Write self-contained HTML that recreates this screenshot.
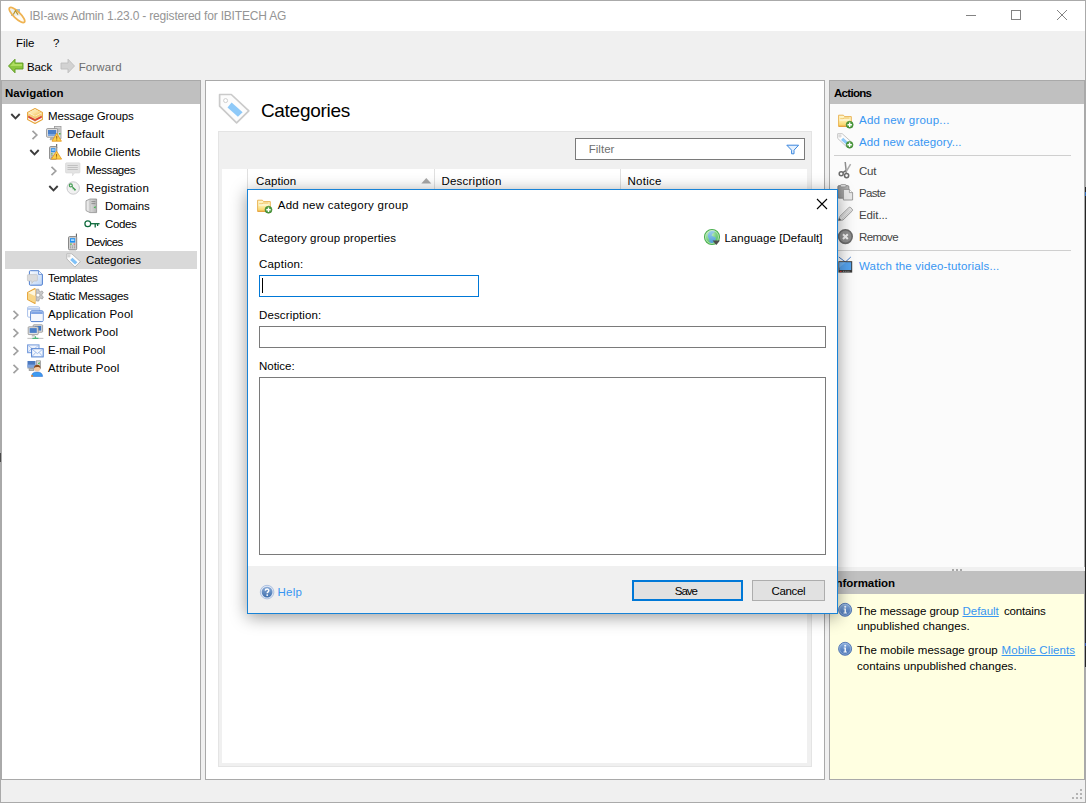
<!DOCTYPE html>
<html><head><meta charset="utf-8"><title>IBI-aws Admin</title>
<style>
*{box-sizing:border-box;margin:0;padding:0}
html,body{width:1086px;height:803px;overflow:hidden;background:#f0f0f0;font-family:"Liberation Sans",sans-serif;font-size:12px;color:#000}
.abs{position:absolute}
.tx{position:absolute;white-space:pre;line-height:1.2}
svg{position:absolute;overflow:visible}

</style></head><body>
<div class="abs" style="left:0;top:0;width:1086px;height:803px;border:1px solid #aaa;background:#f0f0f0"></div>
<div class="abs" style="left:1px;top:1px;width:1084px;height:30px;background:#fff"></div>

<div class="abs" style="left:1085px;top:187px;width:1px;height:480px;background:#252525"></div>
<div class="abs" style="left:1085px;top:192px;width:1px;height:4px;background:#2f6fc0"></div>
<div class="abs" style="left:1085px;top:643px;width:1px;height:3px;background:#2f55b0"></div>
<div class="abs" style="left:0;top:453px;width:1px;height:9px;background:#4a4a4a"></div>

<!-- nav panel -->
<div class="abs" style="left:1px;top:80px;width:200px;height:700px;background:#fff;border:1px solid #a9a9a9"></div>
<div class="abs" style="left:2px;top:81px;width:198px;height:23px;background:#c0c0c0"></div>
<div class="abs" style="left:5px;top:251px;width:192px;height:18px;background:#d9d9d9"></div>

<!-- main panel -->
<div class="abs" style="left:205px;top:80px;width:620px;height:700px;background:#fff;border:1px solid #a9a9a9"></div>
<div class="abs" style="left:218px;top:131px;width:594px;height:636px;background:#f0f0f0;border:1px solid #e4e4e4"></div>
<div class="abs" style="left:222px;top:169px;width:585px;height:594px;background:#fff"></div>
<div class="abs" style="left:247px;top:169px;width:1px;height:22px;background:#e0e0e0"></div>
<div class="abs" style="left:434px;top:169px;width:1px;height:22px;background:#e0e0e0"></div>
<div class="abs" style="left:620px;top:169px;width:1px;height:22px;background:#e0e0e0"></div>
<div class="abs" style="left:575px;top:138px;width:230px;height:22px;background:#fff;border:1px solid #7a7a7a"></div>

<!-- actions panel -->
<div class="abs" style="left:829px;top:80px;width:256px;height:487px;background:#fbfbfb;border:1px solid #a9a9a9;border-bottom:none"></div>
<div class="abs" style="left:830px;top:81px;width:254px;height:23px;background:#c0c0c0"></div>
<div class="abs" style="left:834px;top:155px;width:237px;height:1px;background:#cfcfcf"></div>
<div class="abs" style="left:834px;top:250px;width:237px;height:1px;background:#cfcfcf"></div>

<!-- info panel -->
<div class="abs" style="left:829px;top:571px;width:256px;height:209px;background:#ffffe1;border:1px solid #a9a9a9;border-top:none"></div>
<div class="abs" style="left:830px;top:571px;width:254px;height:23px;background:#c0c0c0"></div>

<span class="tx" style="left:29.4px;top:9px;font-size:12px;letter-spacing:-0.18px;color:#959595;">IBI-aws Admin 1.23.0 - registered for IBITECH AG</span>
<span class="tx" style="left:15.9px;top:37px;font-size:11.5px;letter-spacing:-0.03px;color:#000;">File</span>
<span class="tx" style="left:52.9px;top:37px;font-size:11.5px;letter-spacing:-1.00px;color:#000;">?</span>
<span class="tx" style="left:26.9px;top:61px;font-size:11.5px;letter-spacing:-0.10px;color:#000;">Back</span>
<span class="tx" style="left:78.7px;top:61px;font-size:11.5px;letter-spacing:0.13px;color:#6d6d6d;">Forward</span>
<span class="tx" style="left:4.9px;top:87px;font-size:11.5px;letter-spacing:-0.01px;color:#000;font-weight:bold;">Navigation</span>
<span class="tx" style="left:833.9px;top:87px;font-size:11.5px;letter-spacing:-0.68px;color:#000;font-weight:bold;">Actions</span>
<span class="tx" style="left:832.4px;top:577px;font-size:11.5px;letter-spacing:-0.06px;color:#000;font-weight:bold;">Information</span>
<span class="tx" style="left:48.0px;top:110px;font-size:11.5px;letter-spacing:-0.14px;color:#000;">Message Groups</span>
<span class="tx" style="left:67.0px;top:128px;font-size:11.5px;letter-spacing:0.12px;color:#000;">Default</span>
<span class="tx" style="left:67.0px;top:146px;font-size:11.5px;letter-spacing:0.08px;color:#000;">Mobile Clients</span>
<span class="tx" style="left:86.0px;top:164px;font-size:11.5px;letter-spacing:-0.40px;color:#000;">Messages</span>
<span class="tx" style="left:86.0px;top:182px;font-size:11.5px;letter-spacing:0.13px;color:#000;">Registration</span>
<span class="tx" style="left:105.0px;top:200px;font-size:11.5px;letter-spacing:-0.10px;color:#000;">Domains</span>
<span class="tx" style="left:105.0px;top:218px;font-size:11.5px;letter-spacing:-0.40px;color:#000;">Codes</span>
<span class="tx" style="left:86.0px;top:236px;font-size:11.5px;letter-spacing:-0.60px;color:#000;">Devices</span>
<span class="tx" style="left:86.0px;top:254px;font-size:11.5px;letter-spacing:-0.06px;color:#000;">Categories</span>
<span class="tx" style="left:48.0px;top:272px;font-size:11.5px;letter-spacing:-0.33px;color:#000;">Templates</span>
<span class="tx" style="left:48.0px;top:290px;font-size:11.5px;letter-spacing:-0.25px;color:#000;">Static Messages</span>
<span class="tx" style="left:48.0px;top:308px;font-size:11.5px;letter-spacing:0.17px;color:#000;">Application Pool</span>
<span class="tx" style="left:48.0px;top:326px;font-size:11.5px;letter-spacing:0.16px;color:#000;">Network Pool</span>
<span class="tx" style="left:48.0px;top:344px;font-size:11.5px;letter-spacing:-0.14px;color:#000;">E-mail Pool</span>
<span class="tx" style="left:48.0px;top:362px;font-size:11.5px;letter-spacing:0.18px;color:#000;">Attribute Pool</span>
<span class="tx" style="left:260.9px;top:100px;font-size:19px;letter-spacing:-0.28px;color:#000;">Categories</span>
<span class="tx" style="left:588.7px;top:143px;font-size:11.5px;letter-spacing:0.04px;color:#707070;">Filter</span>
<span class="tx" style="left:256.1px;top:175px;font-size:11.5px;letter-spacing:0.07px;color:#000;">Caption</span>
<span class="tx" style="left:441.4px;top:175px;font-size:11.5px;letter-spacing:0.24px;color:#000;">Description</span>
<span class="tx" style="left:627.4px;top:175px;font-size:11.5px;letter-spacing:0.28px;color:#000;">Notice</span>
<span class="tx" style="left:859.0px;top:114px;font-size:11.5px;letter-spacing:0.23px;color:#3896f2;">Add new group...</span>
<span class="tx" style="left:859.0px;top:136px;font-size:11.5px;letter-spacing:0.09px;color:#3896f2;">Add new category...</span>
<span class="tx" style="left:859.0px;top:165px;font-size:11.5px;letter-spacing:-0.20px;color:#444;">Cut</span>
<span class="tx" style="left:859.0px;top:187px;font-size:11.5px;letter-spacing:-0.65px;color:#444;">Paste</span>
<span class="tx" style="left:859.0px;top:209px;font-size:11.5px;letter-spacing:-0.10px;color:#444;">Edit...</span>
<span class="tx" style="left:859.0px;top:231px;font-size:11.5px;letter-spacing:-0.66px;color:#444;">Remove</span>
<span class="tx" style="left:859.0px;top:260px;font-size:11.5px;letter-spacing:0.17px;color:#3896f2;">Watch the video-tutorials...</span>
<span class="tx" style="left:857.0px;top:605px;font-size:11.5px;letter-spacing:-0.03px;color:#000;">The message group</span>
<span class="tx" style="left:962.5px;top:605px;font-size:11.5px;letter-spacing:-0.02px;color:#3896f2;text-decoration:underline">Default</span>
<span class="tx" style="left:1003.9px;top:605px;font-size:11.5px;letter-spacing:-0.13px;color:#000;">contains</span>
<span class="tx" style="left:857.0px;top:620px;font-size:11.5px;letter-spacing:0.04px;color:#000;">unpublished changes.</span>
<span class="tx" style="left:857.0px;top:644px;font-size:11.5px;letter-spacing:0.06px;color:#000;">The mobile message group</span>
<span class="tx" style="left:1001.6px;top:644px;font-size:11.5px;letter-spacing:0.10px;color:#3896f2;text-decoration:underline">Mobile Clients</span>
<span class="tx" style="left:857.0px;top:660px;font-size:11.5px;letter-spacing:0.06px;color:#000;">contains unpublished changes.</span>

<!-- ICONS -->
<!-- app icon -->
<svg style="left:8px;top:5px" width="18" height="19" viewBox="0 0 18 19">
 <rect x="3" y="4" width="9" height="7" fill="#9fc0dc"/>
 <ellipse cx="9" cy="10" rx="10.3" ry="3.3" transform="rotate(44 9 10)" fill="#fffaf0" fill-opacity=".82" stroke="#efb352" stroke-width="1.8"/>
 <path d="M5.4 9.6L7.4 5.6L10 9.6" fill="none" stroke="#b8962a" stroke-width="1.2"/>
</svg>
<!-- window buttons -->
<svg style="left:960px;top:5px" width="120" height="22" viewBox="0 0 120 22" fill="none" stroke="#838383" stroke-width="1">
 <path d="M6 10.5H16"/>
 <rect x="51.5" y="5.5" width="9" height="9"/>
 <path d="M97 5L107 15M107 5L97 15"/>
</svg>
<!-- back / forward -->
<svg style="left:8px;top:58px" width="16" height="16" viewBox="0 0 16 16">
 <path d="M0.5 8L7 1.2V5H15V11H7V14.8Z" fill="#8cc63f" stroke="#5a9a1e" stroke-width=".9" stroke-linejoin="round"/>
 <path d="M2.2 8L6.3 3.6V6H14V8Z" fill="#b9e36a" opacity=".8"/>
</svg>
<svg style="left:60px;top:58px" width="16" height="16" viewBox="0 0 16 16">
 <path d="M14.5 8L8 1.2V5H1V11H8V14.8Z" fill="#d2d2d2" stroke="#bdbdbd" stroke-width=".9" stroke-linejoin="round"/>
</svg>
<!-- nav chevrons -->
<svg style="left:0;top:0" width="210" height="400" viewBox="0 0 210 400" fill="none" stroke-linecap="butt">
 <g stroke="#3c3c3c" stroke-width="1.9">
  <path d="M11.3 114L15.5 118.3L19.7 114"/>
  <path d="M30.3 150L34.5 154.3L38.7 150"/>
  <path d="M49.3 186L53.5 190.3L57.7 186"/>
 </g>
 <g stroke="#a0a0a0" stroke-width="1.7">
  <path d="M32.5 130.8L36.8 135L32.5 139.2"/>
  <path d="M51.5 166.8L55.8 171L51.5 175.2"/>
  <path d="M13.5 310.8L17.8 315L13.5 319.2"/>
  <path d="M13.5 328.8L17.8 333L13.5 337.2"/>
  <path d="M13.5 346.8L17.8 351L13.5 355.2"/>
  <path d="M13.5 364.8L17.8 369L13.5 373.2"/>
 </g>
</svg>

<!-- Message Groups -->
<svg style="left:27px;top:108px" width="16" height="16" viewBox="0 0 16 16">
 <defs><linearGradient id="mg1" x1="0" y1="0" x2="1" y2="1"><stop offset="0" stop-color="#fdf3cf"/><stop offset=".5" stop-color="#fbe3a0"/><stop offset="1" stop-color="#f2b548"/></linearGradient></defs>
 <path d="M8 .6L15.4 4.4V11.6L8 15.4L.6 11.6V4.4Z" fill="#fff" stroke="#e6a53a" stroke-width="1.1" stroke-linejoin="round"/>
 <path d="M8 1.2L14.8 4.6L8 8L1.2 4.6Z" fill="url(#mg1)"/>
 <path d="M1.2 5L8 8.4L14.8 5V7.4L8 10.8L1.2 7.4Z" fill="#f6cf74"/>
 <path d="M1.2 7.6L8 11L14.8 7.6V9.8L8 13.2L1.2 9.8Z" fill="#d6452f"/>
 <path d="M8 8.4V15" stroke="#e9b050" stroke-width=".6" opacity=".7"/>
</svg>
<!-- Default: monitor+tower+warning -->
<svg style="left:46px;top:126px" width="17" height="17" viewBox="0 0 17 17">
 <rect x="8.5" y=".5" width="6.5" height="12" fill="#d9d9d9" stroke="#9a9a9a" stroke-width=".8"/>
 <path d="M10 3H14M10 5H14" stroke="#9a9a9a" stroke-width=".7"/>
 <rect x="13" y="7" width="1.5" height="1.5" fill="#3fb83f"/>
 <rect x=".6" y="2.6" width="11" height="8.6" rx=".8" fill="#e4e4e4" stroke="#8e8e8e" stroke-width=".9"/>
 <rect x="2" y="4" width="8.2" height="5.6" fill="#4a7fc8"/>
 <path d="M2 8h8.2v1.6H2z" fill="#7aa6e0"/>
 <path d="M4 13.8H9V12H4.8Z" fill="#bdbdbd" stroke="#8e8e8e" stroke-width=".6"/>
 <path d="M10.7 7.3L15.4 15.2H6Z" fill="#fbd24a" stroke="#e89b25" stroke-width=".9" stroke-linejoin="round"/>
 <path d="M10.7 10V12.8M10.7 13.6V14.5" stroke="#a8681a" stroke-width="1.1"/>
</svg>
<!-- Mobile Clients -->
<svg style="left:48px;top:143px" width="16" height="18" viewBox="0 0 16 18">
 <path d="M8.7 1V5" stroke="#555" stroke-width="1"/>
 <rect x="1.6" y="3.6" width="7.2" height="12.6" rx="1" fill="#d0d0d0" stroke="#7c7c7c" stroke-width=".9"/>
 <rect x="3" y="5.2" width="4.4" height="4" fill="#2f8fe8"/>
 <rect x="3.7" y="6.2" width="3" height="1.6" fill="#9fd0ff"/>
 <rect x="3" y="10.4" width="1.6" height="1" fill="#3fb83f"/>
 <path d="M3 12.8h4M3 14.4h4" stroke="#8a8a8a" stroke-width=".8"/>
 <path d="M8.5 8.2L13.6 16.1H3.4Z" fill="#fbd24a" stroke="#e89b25" stroke-width=".9" stroke-linejoin="round"/>
 <path d="M8.5 11V13.7M8.5 14.5V15.4" stroke="#a8681a" stroke-width="1.1"/>
</svg>
<!-- Messages bubble (disabled) -->
<svg style="left:65px;top:162px" width="16" height="16" viewBox="0 0 16 16">
 <path d="M1.5.8H14a1 1 0 0 1 1 1V10a1 1 0 0 1-1 1H9.5L7.5 13.8V11H1.5a1 1 0 0 1-1-1V1.8a1 1 0 0 1 1-1Z" fill="#e3e3e3" stroke="#d6d6d6" stroke-width=".6"/>
 <path d="M2.5 3.5H12.8M2.5 5.5H12.8M2.5 7.5H12.8" stroke="#bdbdbd" stroke-width=".9"/>
</svg>
<!-- Registration -->
<svg style="left:66px;top:181px" width="14" height="14" viewBox="0 0 14 14">
 <circle cx="7.2" cy="7" r="6.2" fill="#f1f1f1" stroke="#c4c4c8" stroke-width=".9"/>
 <circle cx="4.8" cy="4.4" r="1.5" fill="none" stroke="#3f9a4f" stroke-width="1.1"/>
 <path d="M5.8 5.4L9.8 9.2M7.6 7.2L6.6 8.2M8.8 8.3L7.9 9.2" stroke="#3f9a4f" stroke-width="1.1" fill="none"/>
</svg>
<!-- Domains server -->
<svg style="left:85px;top:198px" width="14" height="16" viewBox="0 0 14 16">
 <defs><linearGradient id="sv1" x1="0" y1="0" x2="1" y2="0"><stop offset="0" stop-color="#f2f2f2"/><stop offset="1" stop-color="#b4b4b4"/></linearGradient></defs>
 <path d="M1 2.8L5 1H11.6V14.6H5L1 12.6Z" fill="url(#sv1)" stroke="#8f8f8f" stroke-width=".8" stroke-linejoin="round"/>
 <path d="M5 1V14.6" stroke="#a8a8a8" stroke-width=".6"/>
 <path d="M6.4 3.6H10.4M6.4 5.6H10.4" stroke="#808080" stroke-width=".8"/>
 <path d="M8.6 9.4L10.6 8V10.4Z" fill="#39b54a"/>
</svg>
<!-- Codes key -->
<svg style="left:84px;top:219px" width="17" height="11" viewBox="0 0 17 11" fill="none" stroke="#0e6a3c">
 <circle cx="3.8" cy="4.8" r="2.9" stroke-width="1.25"/>
 <path d="M6.6 4.7H15.6" stroke-width="1.3"/>
 <path d="M11.2 5V8.6M13.6 5V7" stroke-width="1.3"/>
</svg>
<!-- Devices phone -->
<svg style="left:67px;top:233px" width="12" height="18" viewBox="0 0 12 18">
 <path d="M9.4 .6V4.4" stroke="#555" stroke-width="1"/>
 <rect x="1.5" y="3.6" width="8.2" height="13.2" rx="1.1" fill="#d2d2d2" stroke="#7c7c7c" stroke-width=".9"/>
 <rect x="3" y="5.2" width="5.2" height="4.4" fill="#1f8ff0"/>
 <rect x="3.9" y="6.2" width="3.4" height="1.8" fill="#a6d6ff"/>
 <rect x="3" y="10.6" width="1.8" height="1" fill="#3fb83f"/><rect x="6.6" y="10.6" width="1.6" height="1" fill="#e04a3a"/>
 <path d="M3 13h5.2M3 14.8h5.2" stroke="#8a8a8a" stroke-width=".9" stroke-dasharray="1.2 .8"/>
</svg>
<!-- Categories tag (nav) -->
<svg style="left:65.5px;top:252.5px" width="16" height="15" viewBox="0 0 16 15">
 <path d="M.8 .8H5.8L14.4 8.6L8.9 14.1L.8 5.9Z" fill="#fcfcfc" stroke="#b9b9b9" stroke-width="1" stroke-linejoin="round"/>
 <circle cx="3" cy="3" r="1.05" fill="#fff" stroke="#b4b4b4" stroke-width=".7"/>
 <path d="M6.4 4.8L11.4 9.3L9.1 11.5L4.2 7Z" fill="#7fc1f7"/>
</svg>
<!-- Templates -->
<svg style="left:27px;top:270px" width="17" height="16" viewBox="0 0 17 16">
 <defs><linearGradient id="tp1" x1="0" y1="0" x2="1" y2="1"><stop offset="0" stop-color="#fafcff"/><stop offset="1" stop-color="#bcd4f5"/></linearGradient></defs>
 <path d="M3.4 .7H11.6L15.4 4.4V14a1.2 1.2 0 0 1-1.2 1.2H3.4a1 1 0 0 1-1-1V1.7a1 1 0 0 1 1-1Z" fill="url(#tp1)" stroke="#4f7fd0" stroke-width="1"/>
 <path d="M11.6 .7V4.4H15.4" fill="#fff" stroke="#4f7fd0" stroke-width=".8"/>
 <path d="M1.4 4.6H9.4a1 1 0 0 1 1 1V10a1 1 0 0 1-1 1H6.8L4.8 13.4V11H1.4a1 1 0 0 1-1-1V5.6a1 1 0 0 1 1-1Z" fill="#dcdcdc" stroke="#bdbdbd" stroke-width=".6"/>
</svg>
<!-- Static messages -->
<svg style="left:27px;top:288px" width="17" height="16" viewBox="0 0 17 16">
 <g fill="#c9c9c9" stroke="#9c9c9c" stroke-width=".7">
  <path d="M9.3 1.2H11.7L12.1 3.1L13.4 3.8L15.1 2.9L16.3 4.9L14.9 6.2V7.8L16.4 8.9L15.3 11L13.5 10.3L12.2 11.1L11.9 13H9.4Z"/>
 </g>
 <circle cx="11" cy="7.1" r="2" fill="#fff" stroke="#9c9c9c" stroke-width=".7"/>
 <path d="M8 .6V15.4L.6 11.6V4.4Z" fill="#fbe3a0" stroke="#e6a53a" stroke-width="1.1" stroke-linejoin="round"/>
 <path d="M1.2 4.8L8 8V14.6L1.2 11.2Z" fill="#f8d688"/>
 <path d="M1.2 4.8L8 8V1.4Z" fill="#fef6dc"/>
</svg>
<!-- Application pool -->
<svg style="left:27px;top:306px" width="17" height="17" viewBox="0 0 17 17">
 <rect x=".6" y=".8" width="12" height="10.4" rx="1.2" fill="#fff" stroke="#a9c1ea" stroke-width="1"/>
 <path d="M1 1.8h11.2v2.2H1z" fill="#b9cdf0"/>
 <rect x="3.7" y="4.8" width="12.4" height="10.8" rx="1.2" fill="#fff" stroke="#4f7fd0" stroke-width="1"/>
 <path d="M4.2 5.4h11.4v2.6H4.2z" fill="#7fa4e4"/>
 <path d="M4.2 8h11.4v7H4.2z" fill="#f4f7fd"/>
</svg>
<!-- Network pool -->
<svg style="left:27px;top:324px" width="17" height="16" viewBox="0 0 17 16">
 <rect x="6.2" y=".8" width="9.4" height="7.4" rx=".7" fill="#dedede" stroke="#8e8e8e" stroke-width=".8"/>
 <rect x="7.6" y="2" width="6.6" height="4.6" fill="#3f78c6"/>
 <rect x="1.2" y="2.8" width="10" height="7.8" rx=".7" fill="#e4e4e4" stroke="#8e8e8e" stroke-width=".8"/>
 <rect x="2.6" y="4.1" width="7.2" height="4.8" fill="#4a7fc8"/>
 <path d="M4.6 12.4H7.8V10.8H5Z" fill="#bdbdbd"/>
 <path d="M.4 14.4H16.4" stroke="#c6c6c6" stroke-width="1.1"/>
 <path d="M5.4 14.4H11.4M8.4 12.2V14.4" stroke="#4fb878" stroke-width="1.3"/>
</svg>
<!-- Email pool -->
<svg style="left:27px;top:344px" width="17" height="14" viewBox="0 0 17 14">
 <rect x=".6" y=".9" width="11.4" height="7.8" fill="#eef3fc" stroke="#6f97da" stroke-width="1"/>
 <path d="M1 1.3L6.3 5.6L11.6 1.3M1 8.3L4.6 4.4M11.6 8.3L8 4.4" fill="none" stroke="#9db9e8" stroke-width=".8"/>
 <rect x="4.6" y="4.7" width="11.6" height="8.2" fill="#f3f7fd" stroke="#4f7fd0" stroke-width="1"/>
 <path d="M5 5.1L10.4 9.6L15.8 5.1M5 12.5L8.8 8.4M15.8 12.5L12 8.4" fill="none" stroke="#8fb0e6" stroke-width=".8"/>
</svg>
<!-- Attribute pool -->
<svg style="left:27px;top:360px" width="17" height="17" viewBox="0 0 17 17">
 <rect x="9.4" y=".8" width="4.2" height="8" fill="#d6d6d6" stroke="#8e8e8e" stroke-width=".7"/>
 <path d="M10.8 3.4L12.6 2V4.4Z" fill="#39b54a"/>
 <rect x=".5" y="1" width="8" height="6.6" fill="#4a78c0"/>
 <path d="M.5 4.6h8v3H.5z" fill="#7ea2dc"/>
 <path d="M.5 8.2H8.5M2 10.4H7V8.8H2.4Z" stroke="#8e8e8e" stroke-width=".8" fill="#cfcfcf"/>
 <path d="M4.6 16.4C4.8 13.2 6.6 12 10 12C13.4 12 15.2 13.2 15.6 16.4Z" fill="#3f9bf0" stroke="#2f6fd0" stroke-width=".6"/>
 <circle cx="10.2" cy="8.6" r="3" fill="#f6c9a0"/>
 <path d="M7 8.2C7 5.6 8.6 4.8 10.2 4.8C12.2 4.8 13.5 5.8 13.4 8.2C12.4 7 11.4 6.8 10 7C8.6 7.2 7.8 7.4 7 8.2Z" fill="#8a4a1c"/>
 <rect x="4.3" y="15" width="1.6" height="1.8" fill="#f08a2a"/>
</svg>
<!-- big categories tag -->
<svg style="left:218px;top:93px" width="33" height="32" viewBox="218 93 33 32">
 <path d="M219.6 94.5H231.3L248.8 110.8L236.6 122.9L219.6 106.2Z" fill="#fcfcfc" stroke="#cacaca" stroke-width="1.7" stroke-linejoin="round"/>
 <circle cx="225.6" cy="100.6" r="2" fill="#fff" stroke="#c8c8c8" stroke-width=".9"/>
 <path d="M231.6 102.4L242.6 112.2L237.9 116.8L227.5 107.5Z" fill="#8ec9f8"/>
</svg>
<!-- filter funnel -->
<svg style="left:786px;top:144px" width="14" height="11" viewBox="0 0 14 11">
 <path d="M.8 1.2H12.6L8 6.2V9.8H5.6V6.2Z" fill="#e6f1fd" stroke="#3a86de" stroke-width="1" stroke-linejoin="round"/>
</svg>
<!-- sort arrow -->
<svg style="left:421px;top:177px" width="11" height="8" viewBox="0 0 11 8"><path d="M.3 6.6L5.3 1L10.3 6.6Z" fill="#a8a8a8"/></svg>
<!-- actions: folder+ -->
<svg style="left:838px;top:113.6px" width="16" height="15" viewBox="0 0 16 15">
 <defs><linearGradient id="fdA" x1="0" y1="0" x2="0" y2="1"><stop offset="0" stop-color="#fff8d2"/><stop offset=".55" stop-color="#fdeaa0"/><stop offset="1" stop-color="#f8d060"/></linearGradient></defs>
 <path d="M.6 1.2H5.4L6.6 2.6H13.3V12.3H.6Z" fill="url(#fdA)" stroke="#e8ae48" stroke-width=".9" stroke-linejoin="round"/>
 <path d="M.6 12.3H13.3" stroke="#e39a32" stroke-width=".9"/>
 <path d="M2.2 4.8H5L6 4H11.4" fill="none" stroke="#edc064" stroke-width=".9"/>
 <path d="M1.6 6H12.4" stroke="#fffdf0" stroke-width="1" opacity=".9"/>
 <circle cx="11.7" cy="10.7" r="3.5" fill="#4c9c3e" stroke="#3a7f2e" stroke-width=".6"/>
 <path d="M11.7 8.5V12.9M9.5 10.7H13.899999999999999" stroke="#fff" stroke-width="1.4"/>
</svg>
<!-- actions: tag+ -->
<svg style="left:837px;top:133px" width="17" height="16" viewBox="0 0 17 16">
 <path d="M.7 .7H5.2L14.4 9L9.6 13.8L.7 5.4Z" fill="#fcfcfc" stroke="#c4c4c4" stroke-width="1" stroke-linejoin="round"/>
 <circle cx="3" cy="3" r="1.1" fill="#fff" stroke="#bdbdbd" stroke-width=".7"/>
 <path d="M6.2 4.8L11.4 9.4L9.2 11.6L4 6.9Z" fill="#8ec9f8"/>
 <circle cx="12.6" cy="11.8" r="3.4" fill="#4a9a3c" stroke="#3a7f2e" stroke-width=".6"/>
 <path d="M12.6 9.6V14M10.4 11.8H14.8" stroke="#fff" stroke-width="1.4"/>
</svg>
<!-- cut -->
<svg style="left:838px;top:161px" width="15" height="18" viewBox="0 0 15 18" fill="none">
 <path d="M7.2 1L8.4 12" stroke="#8c8c8c" stroke-width="1.5"/>
 <path d="M12.6 3.2L7.6 11.6" stroke="#ababab" stroke-width="1.5"/>
 <circle cx="3.2" cy="12.8" r="2" stroke="#6a6a6a" stroke-width="1.5"/>
 <circle cx="8.6" cy="14.6" r="2.1" stroke="#6a6a6a" stroke-width="1.5"/>
 <path d="M4.8 11.6L7.8 9.6" stroke="#6a6a6a" stroke-width="1.3"/>
</svg>
<!-- paste -->
<svg style="left:837px;top:184px" width="17" height="17" viewBox="0 0 17 17">
 <defs><linearGradient id="ps1" x1="0" y1="0" x2="1" y2="0"><stop offset="0" stop-color="#8c8c8c"/><stop offset="1" stop-color="#b8b8b8"/></linearGradient></defs>
 <rect x=".8" y="1.6" width="11" height="12.6" rx="1.2" fill="url(#ps1)" stroke="#7a7a7a" stroke-width=".8"/>
 <rect x="3.6" y=".5" width="5.4" height="2.4" rx=".8" fill="#dcdcdc" stroke="#8a8a8a" stroke-width=".7"/>
 <path d="M6.4 5.4H12.4L15.6 8.6V16H6.4Z" fill="#e9e9e9" stroke="#8a8a8a" stroke-width=".8" stroke-linejoin="round"/>
 <path d="M12.4 5.4V8.6H15.6" fill="#fff" stroke="#8a8a8a" stroke-width=".7"/>
</svg>
<!-- edit pencil -->
<svg style="left:837px;top:206px" width="17" height="16" viewBox="0 0 17 16">
 <path d="M1.4 14.6L2.6 10.6L11.6 1.8a1.6 1.6 0 0 1 2.3 0L15 2.9a1.6 1.6 0 0 1 0 2.3L6 14Z" fill="#e6e6e6" stroke="#9a9a9a" stroke-width=".9" stroke-linejoin="round"/>
 <path d="M3.6 11.8L12.6 3M5 13.2L14 4.4" stroke="#bdbdbd" stroke-width=".7" fill="none"/>
 <path d="M1.4 14.6L2.2 12L4.2 14Z" fill="#555"/>
</svg>
<!-- remove -->
<svg style="left:837px;top:228px" width="17" height="17" viewBox="0 0 17 17">
 <circle cx="8.4" cy="8.6" r="6.8" fill="#8f8f8f" stroke="#6c6c6c" stroke-width="1.6"/>
 <path d="M6 6.2L10.8 11M10.8 6.2L6 11" stroke="#f2f2f2" stroke-width="2"/>
</svg>
<!-- tv -->
<svg style="left:837px;top:256px" width="16" height="18" viewBox="0 0 16 18">
 <path d="M1.8 1L8.4 6L13.8 1" fill="none" stroke="#3f78c8" stroke-width="1"/>
 <rect x="1.4" y="5.2" width="13.8" height="11.4" fill="#3c3c3c"/>
 <rect x="2.4" y="6.2" width="11.8" height="7.8" fill="#55a3ee"/>
 <path d="M2 6.2H9L2 12Z" fill="#7fbaf4" opacity=".6"/>
 <rect x="3" y="15" width="1.6" height=".9" fill="#e03030"/>
 <path d="M6 15.4H13" stroke="#9a9a9a" stroke-width=".8" stroke-dasharray="1 .8"/>
</svg>
<!-- info icons -->
<svg style="left:837px;top:602px" width="16" height="16" viewBox="0 0 16 16">
 <defs><linearGradient id="in1" x1="0" y1="0" x2="0" y2="1"><stop offset="0" stop-color="#8fb2de"/><stop offset=".55" stop-color="#5f88c4"/><stop offset="1" stop-color="#4a72b2"/></linearGradient></defs>
 <circle cx="8.1" cy="7.8" r="6.5" fill="url(#in1)" stroke="#4c70b0" stroke-width=".9"/>
 <circle cx="8.1" cy="7.8" r="5.5" fill="none" stroke="#a9c3e6" stroke-width=".7" opacity=".8"/>
 <circle cx="8.2" cy="4.7" r="1.05" fill="#f2f6fb"/>
 <path d="M6.7 6.6H9V10.6H9.9V11.5H6.5V10.6H7.5V7.5H6.7Z" fill="#f2f6fb"/>
</svg>
<svg style="left:837px;top:641px" width="16" height="16" viewBox="0 0 16 16">
 <circle cx="8.1" cy="7.8" r="6.5" fill="url(#in1)" stroke="#4c70b0" stroke-width=".9"/>
 <circle cx="8.1" cy="7.8" r="5.5" fill="none" stroke="#a9c3e6" stroke-width=".7" opacity=".8"/>
 <circle cx="8.2" cy="4.7" r="1.05" fill="#f2f6fb"/>
 <path d="M6.7 6.6H9V10.6H9.9V11.5H6.5V10.6H7.5V7.5H6.7Z" fill="#f2f6fb"/>
</svg>
<!-- splitter dots -->
<div class="abs" style="left:952px;top:569px;width:2px;height:2px;background:#a8a8a8;box-shadow:4px 0 0 #a8a8a8,8px 0 0 #a8a8a8"></div>
<!-- resize grip -->
<svg style="left:1071px;top:788px" width="14" height="14" viewBox="0 0 14 14" fill="#b4b4b4">
 <rect x="9" y="1" width="2" height="2"/><rect x="5" y="5" width="2" height="2"/><rect x="9" y="5" width="2" height="2"/>
 <rect x="1" y="9" width="2" height="2"/><rect x="5" y="9" width="2" height="2"/><rect x="9" y="9" width="2" height="2"/>
</svg>

<!-- dialog -->
<div class="abs" style="left:247px;top:189px;width:591px;height:425px;background:#fff;border:1px solid #1883d7;box-shadow:0 3px 16px 0 rgba(0,0,0,.40)"></div>
<div class="abs" style="left:248px;top:566px;width:589px;height:47px;background:#f0f0f0"></div>
<div class="abs" style="left:259px;top:275px;width:220px;height:22px;background:#fff;border:1px solid #0078d7"></div>
<div class="abs" style="left:262px;top:278px;width:1px;height:15px;background:#000"></div>
<div class="abs" style="left:259px;top:326px;width:567px;height:22px;background:#fff;border:1px solid #7a7a7a"></div>
<div class="abs" style="left:259px;top:377px;width:567px;height:178px;background:#fff;border:1px solid #7a7a7a"></div>
<div class="abs" style="left:632px;top:580px;width:111px;height:21px;background:#e1e1e1;border:2px solid #0078d7"></div>
<div class="abs" style="left:752px;top:580px;width:73px;height:21px;background:#e1e1e1;border:1px solid #adadad"></div>
<!-- dialog close -->
<svg style="left:816px;top:198px" width="12" height="12" viewBox="0 0 12 12"><path d="M1 1L11 11M11 1L1 11" stroke="#000" stroke-width="1.1" fill="none"/></svg>
<!-- dialog folder+ -->
<svg style="left:257px;top:198.6px" width="16" height="15" viewBox="0 0 16 15">
 <defs><linearGradient id="fdB" x1="0" y1="0" x2="0" y2="1"><stop offset="0" stop-color="#fff8d2"/><stop offset=".55" stop-color="#fdeaa0"/><stop offset="1" stop-color="#f8d060"/></linearGradient></defs>
 <path d="M.6 1.2H5.4L6.6 2.6H13.3V12.3H.6Z" fill="url(#fdB)" stroke="#e8ae48" stroke-width=".9" stroke-linejoin="round"/>
 <path d="M.6 12.3H13.3" stroke="#e39a32" stroke-width=".9"/>
 <path d="M2.2 4.8H5L6 4H11.4" fill="none" stroke="#edc064" stroke-width=".9"/>
 <path d="M1.6 6H12.4" stroke="#fffdf0" stroke-width="1" opacity=".9"/>
 <circle cx="11.5" cy="10.7" r="3.5" fill="#4c9c3e" stroke="#3a7f2e" stroke-width=".6"/>
 <path d="M11.5 8.5V12.9M9.3 10.7H13.7" stroke="#fff" stroke-width="1.4"/>
</svg>
<!-- globe -->
<svg style="left:703px;top:228px" width="18" height="18" viewBox="0 0 18 18">
 <defs><radialGradient id="gl1" cx=".38" cy=".3" r=".75"><stop offset="0" stop-color="#d2f0d8"/><stop offset=".5" stop-color="#7fd488"/><stop offset="1" stop-color="#45b552"/></radialGradient>
 <linearGradient id="gl2" x1="0" y1="0" x2="0" y2="1"><stop offset="0" stop-color="#9ccdf0"/><stop offset="1" stop-color="#4a96e0"/></linearGradient></defs>
 <circle cx="9" cy="9" r="7.5" fill="url(#gl1)" stroke="#4cb051" stroke-width="1.1"/>
 <path d="M8.4 2.6C10 2.2 11.6 2.8 12.4 3.8C10.6 4.6 8.8 6 8.6 7.6C10 9 12.2 8.6 13 10C12.4 12.6 10.8 14.8 8.6 15.4C6.8 15 6 13.6 6.2 11.8C5.6 10 4.6 9 4.8 7.2C5.4 5 6.8 3.4 8.4 2.6Z" fill="url(#gl2)" opacity=".92"/>
 <circle cx="9" cy="9" r="6.5" fill="none" stroke="#e0f4cf" stroke-width=".7" opacity=".9"/>
 <path d="M9.6 12.4H17L13.3 17Z" fill="#4d4d4d"/>
</svg>
<!-- help icon -->
<svg style="left:259px;top:584px" width="16" height="16" viewBox="0 0 16 16">
 <defs><linearGradient id="hp1" x1="0" y1="0" x2="0" y2="1"><stop offset="0" stop-color="#8aaad6"/><stop offset="1" stop-color="#3f6fae"/></linearGradient></defs>
 <circle cx="8.1" cy="8.1" r="6.8" fill="#dfe8f5" stroke="#9fb6dc" stroke-width=".8"/>
 <circle cx="8.1" cy="8.1" r="5.4" fill="url(#hp1)"/>
 <path d="M6.3 6.6C6.4 4.6 9.9 4.6 9.8 6.7C9.7 7.9 8.2 7.9 8.2 9.3" fill="none" stroke="#fff" stroke-width="1.5"/>
 <circle cx="8.2" cy="11.1" r=".95" fill="#fff"/>
</svg>
<span class="tx" style="left:277.7px;top:199px;font-size:11.5px;letter-spacing:0.27px;color:#000;">Add new category group</span>
<span class="tx" style="left:259.0px;top:232px;font-size:11.5px;letter-spacing:0.14px;color:#000;">Category group properties</span>
<span class="tx" style="left:724.4px;top:232px;font-size:11.5px;letter-spacing:0.05px;color:#000;">Language [Default]</span>
<span class="tx" style="left:259.0px;top:258px;font-size:11.5px;letter-spacing:0.21px;color:#000;">Caption:</span>
<span class="tx" style="left:259.0px;top:309px;font-size:11.5px;letter-spacing:0.14px;color:#000;">Description:</span>
<span class="tx" style="left:259.0px;top:360px;font-size:11.5px;letter-spacing:-0.03px;color:#000;">Notice:</span>
<span class="tx" style="left:277.4px;top:586px;font-size:11.5px;letter-spacing:0.30px;color:#3896f2;">Help</span>
<span class="tx" style="left:674.8px;top:585px;font-size:11.5px;letter-spacing:-1.00px;color:#000;">Save</span>
<span class="tx" style="left:771.6px;top:585px;font-size:11.5px;letter-spacing:-0.36px;color:#000;">Cancel</span>

</body></html>
